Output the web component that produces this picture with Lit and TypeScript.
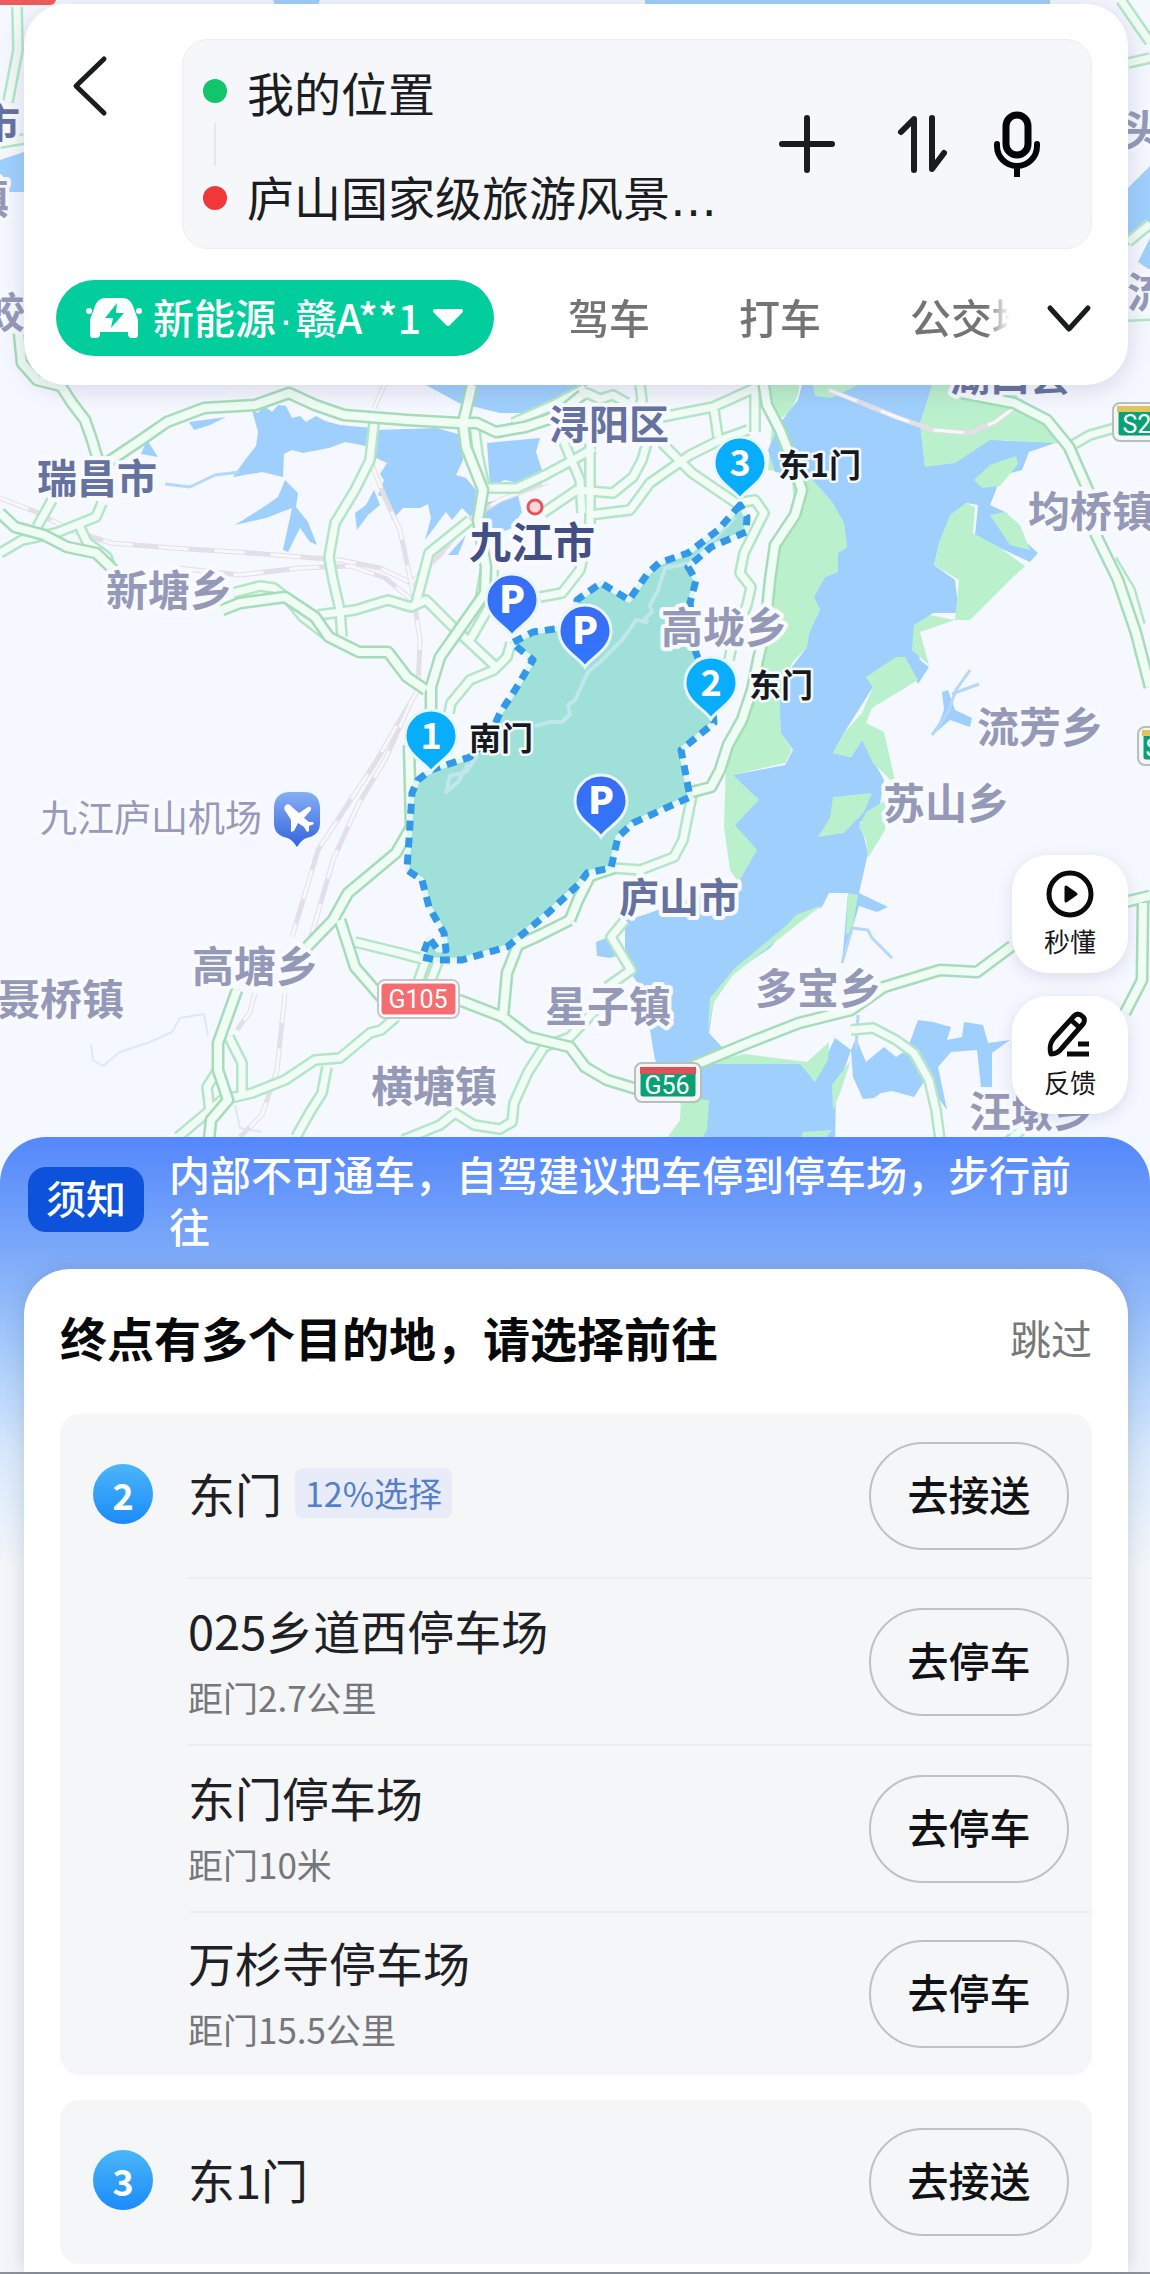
import { LitElement, html, svg, css } from "lit";
import { customElement, property } from "lit/decorators.js";

interface Stop {
  name: string;
  note?: string;
  share?: string;
  action: string;
}

interface Gate {
  index: number;
  stops: Stop[];
}

const GATES: Gate[] = [
  {
    index: 2,
    stops: [
      { name: "东门", share: "12%选择", action: "去接送" },
      { name: "025乡道西停车场", note: "距门2.7公里", action: "去停车" },
      { name: "东门停车场", note: "距门10米", action: "去停车" },
      { name: "万杉寺停车场", note: "距门15.5公里", action: "去停车" },
    ],
  },
  { index: 3, stops: [{ name: "东1门", action: "去接送" }] },
];

const MODES = ["驾车", "打车", "公交地铁"];

const SHORES = [
  "762,380 800,380 798,395 790,412 772,425 768,470 810,477 832,502 844,523 847,547 838,553 838,572 825,577 814,597 820,610 809,633 807,647 792,663 779,697 781,733 792,750 785,763 733,775 745,785 759,800 744,823 757,850 740,885 730,870 724,827 726,760 742,720 758,660 766,600 772,545 795,515 790,460",
  "934,380 1000,380 1040,415 1060,443 1029,443 1005,440 955,463 946,467 925,467 920,423",
];

const ISLANDS = [
  "812,380 868,380 848,390 832,398 815,396",
  "974,480 990,465 1016,456 1018,464 1000,486 982,488",
  "940,540 950,515 966,503 975,507 973,533 1000,548 1025,566 1010,580 970,620 955,620 959,580 934,565",
  "990,515 1005,512 1020,525 1030,550 1010,545 1000,530",
  "914,625 930,615 955,620 920,632 929,665 912,650",
  "866,677 896,657 905,657 918,680 872,708 866,723 884,732 896,785 873,763 862,740 851,757 833,753 844,733 862,713 873,687",
  "833,797 872,793 864,812 844,833 818,837 830,818",
  "859,827 866,812 886,800 885,830 868,858 866,840",
  "787,925 796,915 822,905 733,975 714,1002 708,1030 710,998 735,968",
  "846,935 848,893 858,895 852,930",
  "699,1064 745,1054 807,1062 829,1042 828,1060 815,1082 800,1064 740,1064",
  "681,1097 709,1100 707,1130 700,1142 664,1142 680,1120",
  "851,1060 840,1093 833,1110 832,1085",
  "803,1132 832,1130 822,1142 800,1142",
];

const WATER = [
  "803,380 934,380 920,423 925,467 955,463 990,440 1055,443 1029,452 1022,470 1000,476 996,490 990,505 1007,513 1018,535 1038,553 1030,562 1000,548 975,535 978,505 966,503 940,540 934,565 955,580 959,613 933,613 914,627 920,660 929,667 918,684 905,657 866,677 873,687 844,733 833,753 851,757 862,740 884,780 879,810 860,822 868,853 859,893 888,907 877,912 859,906 842,963 848,893 829,893 822,907 796,917 770,948 733,973 714,1000 709,1033 722,1047 699,1067 729,1060 807,1062 815,1080 835,1038 851,1050 836,1093 835,1142 681,1142 681,1097 655,1060 650,1030 644,993 631,973 625,950 625,920 644,915 740,880 757,850 735,825 759,800 733,775 785,765 793,750 781,733 779,697 792,667 807,647 809,633 820,610 814,597 825,577 838,572 838,553 847,547 844,523 832,502 810,477 775,472 768,450 780,423 798,400",
  "252,410 258,413 264,406 272,412 278,405 286,406 292,418 300,416 306,422 316,416 325,421 340,425 372,428 366,446 345,442 329,448 303,453 292,450 284,454 283,477 262,472 233,477 245,460 256,446 258,432",
  "285,480 298,493 296,507 308,522 317,545 310,542 300,528 288,552 283,550 292,508 266,518 235,525 262,508 278,497",
  "374,430 437,428 461,435 463,460 456,475 466,478 476,490 474,520 462,508 452,520 446,512 440,520 425,540 431,518 428,504 420,508 403,508 392,520 386,498 378,495 384,480 380,474 387,463 374,457",
  "355,513 366,505 374,490 380,505 368,515 357,530",
  "487,443 540,438 536,452 542,470 518,483 505,480 490,486",
  "485,503 518,495 522,512 512,528 500,533 483,523",
  "448,555 466,535 458,555",
  "424,384 459,403 500,413 537,413 562,400 590,384",
  "189,422 226,417 210,425 194,430",
  "141,454 147,440 158,457",
  "851,1050 856,1038 866,1062 884,1047 896,1057 907,1050 918,1020 933,1022 951,1027 947,1040 962,1037 964,1022 983,1025 988,1043 1010,1040 992,1053 992,1087 981,1087 977,1050 951,1052 938,1067 947,1110 925,1080 914,1097 892,1091 881,1093 874,1098 863,1099 853,1077",
  "948,690 955,710 972,718 970,727 950,720 935,733 944,710 942,692",
  "596,942 606,938 620,955 610,958 597,956",
  "0,160 24,152 24,192 0,192",
  "273,0 320,0 318,5 275,5",
  "645,0 1050,0 1050,8 645,8",
  "1128,188 1150,166 1150,222 1128,246",
  "1138,262 1150,238 1150,270",
];

const STREAMS = [
  "165,484 190,487 215,475 240,472",
  "970,670 956,690 948,712 932,735",
  "979,684 952,694",
  "842,963 852,928 868,930 872,938 892,958",
  "858,1015 856,1050",
];

const BROOKS = [
  "91,1045 93,1060 103,1066 120,1052 150,1042 172,1032 180,1018 204,1014 208,1036",
  "235,1105 240,1128 262,1132",
];

const RAILS = [
  "0,498 36,512 70,530 111,543 172,548 237,552 340,560 380,568 411,583",
  "178,568 240,575 300,568 351,566 385,578 412,600",
  "370,460 385,498 400,530 412,587 420,640 418,690 400,720 377,760 344,810 318,850 292,937",
  "412,700 385,760 359,803 333,860 311,937",
  "411,583 440,555 468,520 500,500 548,482",
  "829,390 862,403 896,417 933,430 970,433 995,422 1014,408",
  "285,993 277,1070 262,1115 240,1137",
  "255,993 250,1012 237,1030",
  "385,384 374,408",
];

const ROADS_MINOR = [
  "52,500 37,527",
  "0,553 22,540 56,533 96,517 102,503",
  "78,523 87,542 107,557 112,572",
  "233,593 260,586 274,588 289,600 303,617 329,637",
  "318,615 355,610 388,600 411,607 426,600 451,625 496,667",
  "374,423 370,460 355,490 335,523 329,557 333,580 340,610 342,637",
  "470,520 429,553 422,580 416,603",
  "511,643 507,657 494,670 470,680 451,703 449,713",
  "485,488 517,488 545,475 573,460 594,448",
  "474,423 478,455 485,488",
  "459,630 480,600 486,567",
  "493,570 493,600 470,640",
  "540,597 562,593 580,570 590,523 590,443",
  "543,513 577,490 613,493 633,477 642,460 647,443",
  "563,440 580,480 582,513",
  "590,515 630,510 650,483 690,455 720,440 748,430",
  "662,417 713,407 757,387",
  "755,432 755,385",
  "714,410 718,437",
  "640,385 642,400 638,412",
  "497,433 547,417 587,393 600,399 613,395 627,403",
  "513,423 553,405 585,388",
  "662,443 692,473 736,503 755,500 764,513 744,553 740,573 751,587 747,605 733,640 729,660",
  "229,1037 242,1063 242,1093",
  "218,1070 207,1087 211,1120",
  "178,1137 222,1100 252,1093 285,1080 315,1060 340,1058 370,1033 381,1030 396,1017",
  "327,1067 322,1093 310,1112 296,1137",
  "403,1140 440,1125 455,1113 474,1125 500,1129 512,1122 514,1103 528,1072 544,1047 570,1037 600,1005",
  "355,942 400,953 426,960 418,982",
  "438,962 430,982",
  "614,868 640,870 674,857 683,840 692,795",
  "640,870 640,880",
  "625,920 611,937 631,970 607,987",
  "851,1030 873,1028 896,1040 914,1053 929,1080 936,1110 940,1140",
  "1008,1142 1030,1122",
  "17,7 18,50 8,102",
  "0,143 24,139",
  "1121,0 1136,22 1150,42",
  "1128,63 1150,58",
  "1128,242 1150,224",
  "1128,316 1150,315",
  "1069,447 1090,435 1115,428",
  "1112,560 1130,590 1140,625",
];

const ROADS_MAJOR = [
  "19,333 22,363 37,380 61,386 72,403 85,420 92,440 98,460",
  "108,462 141,440 167,422 204,408 255,405 289,393 315,405 344,415 407,420 459,423 477,423 496,432 525,427 555,417 582,395",
  "472,385 463,423 466,447 483,490 478,520 486,567 485,593 459,630 440,657 431,687 431,720",
  "0,513 15,527 44,535 67,547 96,553 118,574",
  "222,610 240,603 285,597 315,617 329,637 359,652 388,652 407,677 426,690",
  "763,380 767,405 780,430 788,450 802,490 795,515 775,545 770,580 765,630 758,660 752,690 742,720 728,745 720,770 711,787 692,792",
  "962,393 1014,403 1047,420 1069,447 1088,490 1095,533 1118,580 1136,633 1150,687",
  "409,745 411,827 396,853 348,893 333,920 307,947",
  "237,990 218,1043 218,1070 228,1100 211,1120 209,1140",
  "340,920 355,967 381,997 420,998 459,1000 503,1017 529,1037 570,1047 585,1067 607,1080 640,1090",
  "570,920 540,935 518,945 507,973 503,1017",
  "570,920 578,900 590,876 614,868",
  "690,1067 748,1043 799,1023 851,1010 884,987 940,970 977,972 1012,946",
  "1125,902 1150,896",
  "1143,903 1142,980 1125,1013",
];

const PARK =
  "740,505 718,530 688,553 659,563 648,573 629,600 601,583 577,600 572,625 555,629 533,632 512,643 533,660 515,690 500,713 488,740 470,757 431,770 418,780 412,793 407,870 422,880 429,907 444,933 446,950 438,950 429,938 422,957 436,960 462,960 507,947 548,913 580,883 587,873 611,868 618,837 633,823 690,797 683,760 681,750 714,723 711,690 696,653 690,603 696,580 688,567 711,547 746,532 747,517";

const TRAILS = [
  "735,517 715,538 690,563 665,568 658,590 650,605 652,612 645,618 647,622 636,620 628,632 622,640 612,650 600,662 588,672 575,700 568,705 570,714 562,722 550,722 535,726",
  "478,755 466,772 450,776 446,792 458,782 468,764",
];

type Tone = "city" | "district" | "town" | "place";

const LABELS: { text: string; x: number; y: number; tone: Tone }[] = [
  { text: "瑞昌市", x: 97, y: 493, tone: "district" },
  { text: "新塘乡", x: 169, y: 606, tone: "town" },
  { text: "浔阳区", x: 609, y: 439, tone: "district" },
  { text: "九江市", x: 532, y: 558, tone: "city" },
  { text: "高垅乡", x: 724, y: 643, tone: "town" },
  { text: "均桥镇", x: 1091, y: 527, tone: "town" },
  { text: "流芳乡", x: 1040, y: 743, tone: "town" },
  { text: "苏山乡", x: 946, y: 819, tone: "town" },
  { text: "九江庐山机场", x: 151, y: 832, tone: "place" },
  { text: "高塘乡", x: 255, y: 982, tone: "town" },
  { text: "聂桥镇", x: 61, y: 1015, tone: "town" },
  { text: "庐山市", x: 679, y: 912, tone: "district" },
  { text: "星子镇", x: 608, y: 1022, tone: "town" },
  { text: "多宝乡", x: 818, y: 1004, tone: "town" },
  { text: "横塘镇", x: 434, y: 1102, tone: "town" },
  { text: "汪墩乡", x: 1032, y: 1127, tone: "town" },
  { text: "湖口县", x: 1010, y: 391, tone: "district" },
  { text: "市", x: 0, y: 138, tone: "district" },
  { text: "镇", x: -12, y: 214, tone: "town" },
  { text: "蛟", x: 4, y: 328, tone: "town" },
  { text: "头", x: 1142, y: 146, tone: "town" },
  { text: "流", x: 1148, y: 308, tone: "town" },
];

const PINS = [
  { mark: "3", x: 740, y: 464, label: "东1门" },
  { mark: "2", x: 711, y: 684, label: "东门" },
  { mark: "1", x: 431, y: 737, label: "南门" },
  { mark: "P", x: 512, y: 601 },
  { mark: "P", x: 585, y: 632 },
  { mark: "P", x: 601, y: 802 },
];

const lines = (list: string[], cls: string) =>
  list.map((points) => svg`<polyline class=${cls} points=${points}></polyline>`);

const areas = (list: string[], cls: string) =>
  list.map((points) => svg`<polygon class=${cls} points=${points}></polygon>`);

@customElement("scenic-map")
class ScenicMap extends LitElement {
  static styles = css`
    :host {
      display: block;
    }
    .map {
      display: block;
      width: 100%;
      height: auto;
      background: #f5f8ff;
      font-family: "Noto Sans CJK SC", sans-serif;
    }
    .green {
      fill: #bbf0cd;
    }
    .water {
      fill: #9fd0fd;
    }
    .stream,
    .brook,
    .rail,
    .rail-dash,
    .case,
    .core,
    .case-major,
    .core-major,
    .trail,
    .edge,
    .edge-base {
      fill: none;
      stroke-linejoin: round;
    }
    .stream {
      stroke: #b4d8fb;
      stroke-width: 3;
    }
    .brook {
      stroke: #dbe9fa;
      stroke-width: 2;
    }
    .rail {
      stroke: #e3dfe7;
      stroke-width: 5;
    }
    .rail-dash {
      stroke: #f8f8fc;
      stroke-width: 3;
      stroke-dasharray: 30 26;
    }
    .case {
      stroke: #b3e6c6;
      stroke-width: 12;
    }
    .core {
      stroke: #f1fcf6;
      stroke-width: 7;
    }
    .case-major {
      stroke: #a6dcb9;
      stroke-width: 13;
    }
    .core-major {
      stroke: #f0fdf4;
      stroke-width: 8;
    }
    .park {
      fill: #9fe0d8;
    }
    .trail {
      stroke: #bfe7ec;
      stroke-width: 4;
    }
    .edge-base {
      stroke: #e2f6f8;
      stroke-width: 5;
    }
    .edge {
      stroke: #3398ea;
      stroke-width: 7;
      stroke-dasharray: 10 7;
    }
    .label {
      text-anchor: middle;
      paint-order: stroke;
      stroke: #f8faff;
      stroke-width: 8;
      stroke-linejoin: round;
      font-weight: 700;
    }
    .city {
      font-size: 42px;
      fill: #414f85;
    }
    .district {
      font-size: 40px;
      fill: #65729f;
    }
    .town {
      font-size: 42px;
      fill: #9599b8;
    }
    .place {
      font-size: 37px;
      font-weight: 400;
      fill: #979bb9;
    }
    .gate {
      font-size: 32px;
      font-weight: 700;
      fill: #17191f;
      paint-order: stroke;
      stroke: #f4fbff;
      stroke-width: 5;
      stroke-linejoin: round;
    }
    .mark {
      font-size: 36px;
      font-weight: 700;
      fill: #fff;
      text-anchor: middle;
    }
    .mark-p {
      font-size: 38px;
      font-weight: 900;
    }
    .shield {
      font-family: Roboto, sans-serif;
      font-size: 25px;
      fill: #fff;
      text-anchor: middle;
    }
  `;

  private pin(p: { mark: string; x: number; y: number; label?: string }) {
    const fill = p.mark === "P" ? "url(#parking)" : "#08aefc";
    return svg`
      <g transform="translate(${p.x} ${p.y})">
        <path d="M0 35C-5 26-26 18-26-1a26 26 0 0 1 52 0C26 18 5 26 0 35Z" fill=${fill} stroke="#e9f6ff" stroke-width="3"></path>
        <text class="mark ${p.mark === "P" ? "mark-p" : ""}" y="12">${p.mark}</text>
        ${p.label ? svg`<text class="gate" x="38" y="13">${p.label}</text>` : ""}
      </g>`;
  }

  render() {
    return html`<svg class="map" viewBox="0 0 1150 1182" role="img" aria-label="庐山周边地图">
      <defs>
        <linearGradient id="parking" x1="0" y1="0" x2="0" y2="1">
          <stop offset="0" stop-color="#3a6cf3"></stop>
          <stop offset="1" stop-color="#2f77fb"></stop>
        </linearGradient>
        <linearGradient id="airport" x1="0" y1="0" x2="0" y2="1">
          <stop offset="0" stop-color="#86aef4"></stop>
          <stop offset="1" stop-color="#3563dd"></stop>
        </linearGradient>
      </defs>
      ${areas(SHORES, "green")} ${areas(WATER, "water")} ${areas(ISLANDS, "green")}
      ${lines(STREAMS, "stream")} ${lines(BROOKS, "brook")}
      ${lines(RAILS, "rail")} ${lines(RAILS, "rail-dash")}
      ${lines(ROADS_MINOR, "case")} ${lines(ROADS_MINOR, "core")}
      ${lines(ROADS_MAJOR, "case-major")} ${lines(ROADS_MAJOR, "core-major")}
      <polygon class="park" points=${PARK}></polygon>
      ${lines(TRAILS, "trail")}
      <polygon class="edge-base" points=${PARK}></polygon>
      <polygon class="edge" points=${PARK}></polygon>
      <rect x="-6" y="-10" width="62" height="15" rx="6" fill="#ee5b5b"></rect>
      <circle cx="535" cy="507" r="7" fill="#fbd7da" stroke="#e5555c" stroke-width="3"></circle>
      ${LABELS.map((l) => svg`<text class="label ${l.tone}" x=${l.x} y=${l.y}>${l.text}</text>`)}

      <g transform="translate(297 792)">
        <path d="M-7 0h14c10 0 16 6 16 16v15c0 8-4 12-10 14-6 1-9 4-13 10-4-6-7-9-13-10-6-2-10-6-10-14V16C-23 6-17 0-7 0Z" fill="url(#airport)"></path>
        <path d="M-12 14c2-3 5-2 7 1l7 6 9-6c2-1 4 1 3 3l-7 8 5 4 4 0 1 2-5 2 0 5-2 1-3-5-6-4-4 8-3 1 0-12-5-8c-2-2-2-4-1-6Z" fill="#fff"></path>
      </g>

      <rect x="380" y="982" width="77" height="34" rx="5" fill="#f46d70" stroke="#fff" stroke-width="3"></rect>
      <rect x="378" y="980" width="81" height="38" rx="7" fill="none" stroke="#c9c5cb" stroke-width="2"></rect>
      <text class="shield" x="418" y="1008">G105</text>

      <rect x="638" y="1066" width="60" height="33" rx="5" fill="#0aa073" stroke="#f3f6f4" stroke-width="5"></rect>
      <rect x="635" y="1063" width="66" height="39" rx="7" fill="none" stroke="#b9bfbe" stroke-width="2"></rect>
      <rect x="640" y="1067" width="56" height="7" fill="#dd5258"></rect>
      <text class="shield" x="667" y="1094">G56</text>

      <rect x="1116" y="406" width="60" height="32" rx="5" fill="#0aa073" stroke="#f3f6f4" stroke-width="5"></rect>
      <rect x="1113" y="403" width="66" height="38" rx="7" fill="none" stroke="#b9bfbe" stroke-width="2"></rect>
      <rect x="1117" y="406" width="56" height="6" fill="#e2c45c"></rect>
      <text class="shield" x="1144" y="433">S22</text>

      <rect x="1141" y="730" width="60" height="32" rx="5" fill="#0aa073" stroke="#f3f6f4" stroke-width="5"></rect>
      <rect x="1138" y="727" width="66" height="38" rx="7" fill="none" stroke="#b9bfbe" stroke-width="2"></rect>
      <rect x="1142" y="730" width="56" height="6" fill="#e2c45c"></rect>
      <text class="shield" x="1153" y="757">S</text>
      ${PINS.map((p) => this.pin(p))}
    </svg>`;
  }
}

@customElement("route-header")
class RouteHeader extends LitElement {
  static styles = css`
    :host {
      display: block;
    }
    .card {
      display: flex;
      flex-direction: column;
      gap: 31px;
      padding: 35px 36px 29px 32px;
      border-radius: 42px;
      background: #fff;
      box-shadow: 0 4px 24px rgba(90, 90, 130, 0.22);
    }
    button {
      margin: 0;
      padding: 0;
      border: 0;
      background: none;
      color: inherit;
      font: inherit;
      cursor: pointer;
    }
    .icon {
      display: block;
      fill: none;
      stroke: #1b1c1f;
      stroke-linecap: round;
      stroke-linejoin: round;
    }
    .top {
      display: flex;
      align-items: flex-start;
    }
    .back {
      flex: none;
      width: 126px;
      padding: 16px;
    }
    .route {
      flex: 1;
      min-width: 0;
      display: flex;
      align-items: center;
      gap: 20px;
      padding: 0 42px 0 20px;
      border: 1px solid #eceef0;
      border-radius: 26px;
      background: #f5f7fb;
    }
    .rail {
      display: flex;
      flex-direction: column;
      align-items: center;
      gap: 20px;
    }
    .dot {
      width: 24px;
      height: 24px;
      border-radius: 50%;
      background: #12c46b;
    }
    .dot.end {
      background: #f0373a;
    }
    .link {
      width: 2px;
      height: 43px;
      background: #e6e8ec;
    }
    .stops {
      flex: 1;
      min-width: 0;
      display: flex;
      flex-direction: column;
      font-size: 47px;
      line-height: 104px;
      color: #1c1d20;
    }
    .stops button {
      text-align: left;
      white-space: nowrap;
    }
    .more {
      font-family: "DejaVu Sans", sans-serif;
      line-height: 1;
    }
    .actions {
      display: flex;
      gap: 30px;
    }
    .add {
      margin-right: 22px;
    }
    .modes {
      display: flex;
      align-items: center;
      font-size: 41px;
      line-height: 60px;
    }
    .plate {
      display: flex;
      align-items: center;
      gap: 11px;
      height: 76px;
      padding: 0 30px;
      border-radius: 38px;
      background: #02cd9d;
      color: #fff;
      font-weight: 500;
      white-space: nowrap;
    }
    .number {
      padding-bottom: 4px;
    }
    .sep {
      margin: 0 3px;
      font-family: "Liberation Sans", sans-serif;
      line-height: 1;
    }
    .tabs {
      flex: 1;
      min-width: 0;
      display: flex;
      gap: 89px;
      margin: 0 36px 0 74px;
      padding-bottom: 4px;
      overflow: hidden;
      white-space: nowrap;
      color: #747474;
      font-weight: 500;
      -webkit-mask-image: linear-gradient(to right, #000 calc(100% - 24px), transparent);
      mask-image: linear-gradient(to right, #000 calc(100% - 24px), transparent);
    }
    .tabs button {
      flex: none;
    }
  `;

  render() {
    return html`<header class="card">
      <div class="top">
        <button class="back" aria-label="返回">
          <svg class="icon" width="36" height="62" viewBox="0 0 36 62" stroke-width="5"><path d="M32 4 4 31l28 27"></path></svg>
        </button>
        <div class="route">
          <div class="rail"><i class="dot"></i><i class="link"></i><i class="dot end"></i></div>
          <div class="stops">
            <button>我的位置</button>
            <button>庐山国家级旅游风景<span class="more">…</span></button>
          </div>
          <div class="actions">
            <button class="add" aria-label="添加途经点">
              <svg class="icon" width="64" height="66" viewBox="0 0 64 66" stroke-width="6"><path d="M32 7v52M7 33h50"></path></svg>
            </button>
            <button aria-label="交换起终点">
              <svg class="icon" width="64" height="66" viewBox="0 0 64 66" stroke-width="6"><path d="M23 59V8L10 21M41 7v51l12-16"></path></svg>
            </button>
            <button aria-label="语音输入">
              <svg class="icon" width="64" height="66" viewBox="0 0 64 66" stroke-width="6">
                <rect x="21" y="4" width="22" height="40" rx="11" stroke="#050505" stroke-width="7"></rect>
                <path d="M12 33v2a20 20 0 0 0 40 0v-2M32 56v9" stroke="#050505"></path>
              </svg>
            </button>
          </div>
        </div>
      </div>
      <nav class="modes">
        <button class="plate">
          <svg width="56" height="42" viewBox="0 0 56 42" fill="#fff">
            <path d="M20 1h16c6 0 9 3 11 8l4 11c1 2 1 4 1 6v12c0 2-1 3-3 3h-3c-2 0-4-1-4-4v-2H14v2c0 3-2 4-4 4H7c-2 0-3-1-3-3V26c0-2 0-4 1-6L9 9c2-5 5-8 11-8Z"></path>
            <circle cx="3" cy="14" r="3"></circle>
            <circle cx="53" cy="14" r="3"></circle>
            <path d="M31 6 19 21h8l-2 10 13-15h-8Z" fill="#02cd9d"></path>
          </svg>
          <span class="number">新能源<span class="sep">·</span>赣A**1</span>
          <svg width="32" height="20" viewBox="0 0 32 20"><path d="M3 3h26L16 16Z" fill="#fff" stroke="#fff" stroke-width="4" stroke-linejoin="round"></path></svg>
        </button>
        <div class="tabs">${MODES.map((m) => html`<button>${m}</button>`)}</div>
        <button aria-label="展开更多方式">
          <svg class="icon" width="46" height="32" viewBox="0 0 46 32" stroke-width="5"><path d="m4 6 19 21L42 6"></path></svg>
        </button>
      </nav>
    </header>`;
  }
}

@customElement("gate-group")
class GateGroup extends LitElement {
  @property({ attribute: false }) gate!: Gate;

  static styles = css`
    :host {
      display: block;
    }
    .group {
      display: grid;
      grid-template-columns: 93px 1fr;
      column-gap: 35px;
      margin: 0;
      border-radius: 20px;
      background: #f4f6f8;
    }
    .index {
      justify-self: end;
      display: flex;
      align-items: center;
      justify-content: center;
      width: 60px;
      height: 60px;
      margin-top: 50px;
      border-radius: 50%;
      background: linear-gradient(#4bb6f8, #1b8bfb);
      color: #fff;
      font-size: 36px;
      font-weight: 700;
      line-height: 60px;
    }
    .rows {
      margin: 0;
      padding: 0;
      list-style: none;
    }
    .row {
      box-sizing: border-box;
      display: flex;
      align-items: center;
      min-height: 167px;
      padding-right: 23px;
      border-top: 2px solid #eceef1;
    }
    .row:first-child {
      min-height: 163px;
      border-top: 0;
    }
    .row:last-child {
      min-height: 164px;
    }
    .text {
      flex: 1;
      min-width: 0;
    }
    .row:first-child .text {
      padding-bottom: 6px;
    }
    .title {
      display: flex;
      align-items: center;
      gap: 13px;
      font-size: 47px;
      line-height: 66px;
      color: #1f2023;
    }
    .share {
      padding: 0 10px;
      border-radius: 8px;
      background: #e8ebf8;
      color: #5480c8;
      font-size: 34px;
      line-height: 50px;
    }
    .note {
      margin-top: 4px;
      font-size: 35px;
      line-height: 60px;
      color: #75777a;
    }
    .go {
      box-sizing: border-box;
      flex: none;
      width: 200px;
      height: 108px;
      padding: 0 0 6px;
      border: 2px solid #bfc1c4;
      border-radius: 54px;
      background: none;
      color: #111214;
      font: inherit;
      font-size: 41px;
      font-weight: 500;
      cursor: pointer;
    }
  `;

  render() {
    return html`<section class="group">
      <span class="index">${this.gate.index}</span>
      <ul class="rows">
        ${this.gate.stops.map(
          (s) => html`<li class="row">
            <div class="text">
              <div class="title">
                <span>${s.name}</span>
                ${s.share ? html`<span class="share">${s.share}</span>` : ""}
              </div>
              ${s.note ? html`<div class="note">${s.note}</div>` : ""}
            </div>
            <button class="go">${s.action}</button>
          </li>`
        )}
      </ul>
    </section>`;
  }
}

@customElement("app-root")
class AppRoot extends LitElement {
  static styles = css`
    :host {
      display: block;
      font-family: "Noto Sans CJK SC", "Noto Sans", sans-serif;
      background: #f3f6fa;
    }
    button {
      margin: 0;
      padding: 0;
      border: 0;
      background: none;
      font: inherit;
      cursor: pointer;
    }
    .stage {
      position: relative;
    }
    .header {
      position: absolute;
      top: 4px;
      left: 24px;
      right: 22px;
    }
    .tools {
      position: absolute;
      right: 22px;
      bottom: 68px;
      display: flex;
      flex-direction: column;
      gap: 23px;
    }
    .tool {
      display: flex;
      flex-direction: column;
      align-items: center;
      width: 116px;
      padding: 14px 0 10px;
      border-radius: 36px;
      background: #fff;
      box-shadow: 0 4px 16px rgba(90, 90, 130, 0.16);
      color: #17181a;
      font-size: 26px;
      line-height: 44px;
    }
    .tool svg {
      display: block;
      fill: none;
      stroke: #0a0a0a;
      stroke-width: 5;
      stroke-linecap: round;
      stroke-linejoin: round;
    }
    .sheet {
      position: relative;
      margin-top: -45px;
      padding: 0 22px 0 24px;
      border-radius: 46px 46px 0 0;
      border-bottom: 2px solid #8d9299;
      background: linear-gradient(#5487fc 0, #7aa8f9 110px, #a9cdfb 220px, #d9e9fb 320px, #f3f6fa 430px);
    }
    .notice {
      display: flex;
      align-items: center;
      gap: 25px;
      padding: 10px 38px 18px 4px;
      color: #fff;
      font-size: 41px;
      font-weight: 500;
      line-height: 52px;
    }
    .badge {
      flex: none;
      padding: 0 18px 4px;
      border-radius: 18px;
      background: #0d52da;
      font-size: 40px;
      line-height: 61px;
    }
    .notice p {
      margin: 0;
    }
    .card {
      padding: 0 36px 8px;
      border-radius: 46px 46px 0 0;
      background: #fff;
      box-shadow: 0 0 20px rgba(60, 70, 100, 0.2);
    }
    .head {
      display: flex;
      align-items: center;
      justify-content: space-between;
      padding: 34px 0 43px;
    }
    h1 {
      margin: 0;
      font-size: 47px;
      font-weight: 700;
      line-height: 68px;
      color: #08090a;
    }
    .skip {
      color: #77787a;
      font-size: 41px;
    }
    .groups {
      display: flex;
      flex-direction: column;
      gap: 25px;
    }
  `;

  render() {
    return html`
      <div class="stage">
        <scenic-map></scenic-map>
        <route-header class="header"></route-header>
        <div class="tools">
          <button class="tool">
            <svg width="50" height="50" viewBox="0 0 50 50">
              <circle cx="25" cy="25" r="21"></circle>
              <path d="M21 18v14l10-7Z" fill="#0a0a0a" stroke-width="3"></path>
            </svg>
            <span>秒懂</span>
          </button>
          <button class="tool">
            <svg width="50" height="50" viewBox="0 0 50 50">
              <path d="M6 44c-2-7-1-11 3-16L29 6c3-3 6-2 8 0 3 2 3 5 1 8L17 38c-3 4-6 6-11 6Z"></path>
              <path d="m26 10 9 8M33 34h11M22 44h22" stroke-linecap="butt"></path>
            </svg>
            <span>反馈</span>
          </button>
        </div>
      </div>
      <main class="sheet">
        <div class="notice">
          <span class="badge">须知</span>
          <p>内部不可通车，自驾建议把车停到停车场，步行前往</p>
        </div>
        <section class="card">
          <div class="head">
            <h1>终点有多个目的地，请选择前往</h1>
            <button class="skip">跳过</button>
          </div>
          <div class="groups">
            ${GATES.map((g) => html`<gate-group .gate=${g}></gate-group>`)}
          </div>
        </section>
      </main>
    `;
  }
}
